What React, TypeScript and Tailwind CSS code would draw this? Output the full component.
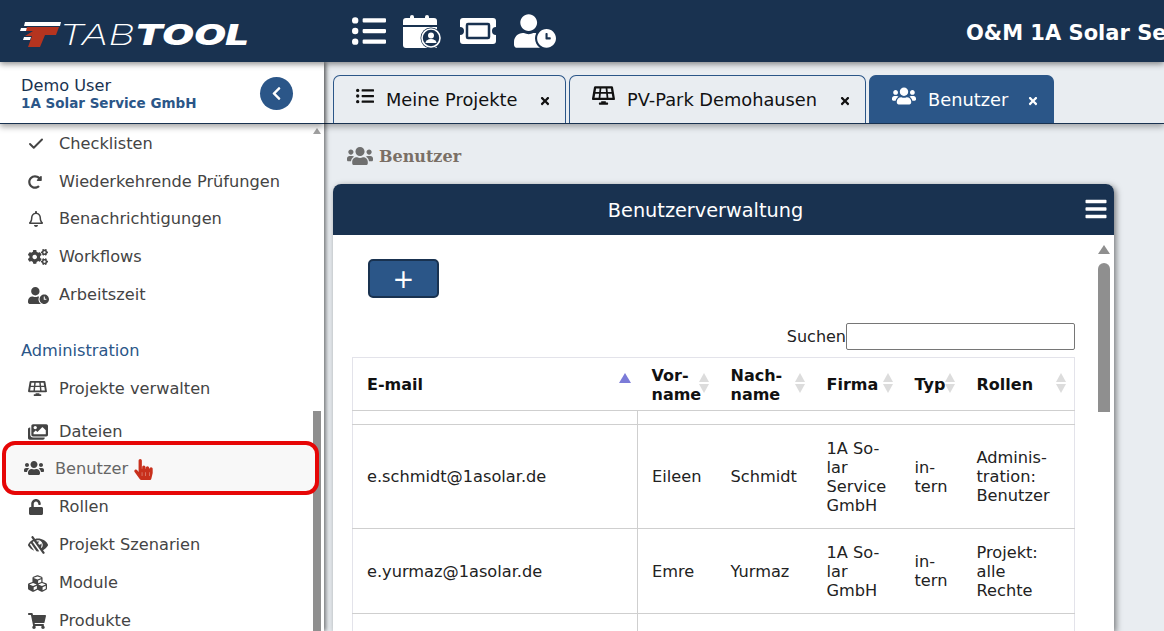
import { ReactNode } from 'react';
import { Check } from 'lucide-react';
import {
  FaBars,
  FaChevronLeft,
  FaCogs,
  FaCubes,
  FaHandPointer,
  FaImages,
  FaListUl,
  FaLowVision,
  FaRedoAlt,
  FaRegBell,
  FaShoppingCart,
  FaSolarPanel,
  FaTimes,
  FaUnlock,
  FaUserClock,
  FaUsers,
} from 'react-icons/fa';

const FONT = "font-['DejaVu_Sans',Verdana,sans-serif]";

function Logo() {
  return (
    <div className="mt-[7px] flex h-[26px] items-center">
      <svg width="43" height="26" viewBox="0 0 43 26" className="-mr-[3px] shrink-0">
        <polygon points="6,0 42,0 41,4 5,4" fill="#ffffff" />
        <polygon points="2,6 12,6 11,9 1,9" fill="#ffffff" />
        <polygon points="8,5 40,5 37,13 26,13 21,25 9,25 13,14 6,14 14,9 7,9" fill="#b5341f" />
        <polygon points="5,15 12,15 11,18 4,18" fill="#ffffff" />
      </svg>
      <span className="origin-left scale-x-[1.47] whitespace-nowrap font-['Inter',sans-serif] text-[28px] italic leading-none text-white">
        <span className="font-extralight">TAB</span>
        <span className="font-black">TOOL</span>
      </span>
    </div>
  );
}

function CalendarUser() {
  return (
    <svg width="38" height="33" viewBox="0 0 38 33" className="block">
      <rect x="7" y="0" width="4" height="6" rx="2" fill="#fff" />
      <rect x="22" y="0" width="4" height="6" rx="2" fill="#fff" />
      <path d="M3 3h28a3 3 0 0 1 3 3v4H0V6a3 3 0 0 1 3-3z" fill="#fff" />
      <path d="M0 12h34v20a1 1 0 0 1-1 1H3a3 3 0 0 1-3-3z" fill="#fff" />
      <circle cx="28" cy="23" r="10.5" fill="#193250" />
      <circle cx="28" cy="23" r="9" fill="none" stroke="#fff" strokeWidth="1.6" />
      <circle cx="28" cy="20.5" r="3" fill="#fff" />
      <path d="M22.5 28a5.5 4 0 0 1 11 0z" fill="#fff" />
    </svg>
  );
}

function Ticket() {
  return (
    <svg width="38" height="28" viewBox="0 0 38 28" fill="none" className="block">
      <path
        d="M4 1h30a3 3 0 0 1 3 3v6a4 4 0 0 0 0 8v6a3 3 0 0 1-3 3H4a3 3 0 0 1-3-3v-6a4 4 0 0 0 0-8V4a3 3 0 0 1 3-3z"
        fill="#fff"
      />
      <rect x="8" y="7" width="22" height="14" rx="1" fill="#fff" stroke="#193250" strokeWidth="2.5" />
    </svg>
  );
}

function NavItem({ icon, label }: { icon: ReactNode; label: string }) {
  return (
    <div className="flex h-[37.8px] items-center pl-[28px] text-[16.2px] text-[#444]">
      <span className="flex w-[31px] shrink-0 items-center">{icon}</span>
      <span>{label}</span>
    </div>
  );
}

function Tab({
  icon,
  label,
  width,
  active,
}: {
  icon: ReactNode;
  label: string;
  width: string;
  active?: boolean;
}) {
  return (
    <div
      className={`${width} flex h-[48px] items-center rounded-t-[7px] border border-b-0 border-[#2b5688] pl-[22px] pt-[2px] text-[17.8px] ${
        active ? 'bg-[#2b5688] text-white' : 'bg-[#e9edf1] text-[#111]'
      }`}
    >
      <span className="mr-[12px] flex -translate-y-[5px] items-center">{icon}</span>
      <span className="flex-1 whitespace-nowrap">{label}</span>
      <FaTimes size={12} className="mr-[14px] shrink-0" />
    </div>
  );
}

function SortArrows({ active }: { active?: boolean }) {
  if (active) {
    return (
      <span className="absolute right-[7px] top-[15px] h-0 w-0 border-x-[6px] border-b-[10px] border-x-transparent border-b-[#7b7bd8]" />
    );
  }
  return (
    <span className="absolute right-[8px] top-[15px] flex flex-col gap-[2px]">
      <span className="h-0 w-0 border-x-[5px] border-b-[9px] border-x-transparent border-b-[#dcdcdc]" />
      <span className="h-0 w-0 border-x-[5px] border-t-[9px] border-x-transparent border-t-[#dcdcdc]" />
    </span>
  );
}

function Th({ children, active }: { children: ReactNode; active?: boolean }) {
  return (
    <th className="relative border-b border-[#cfcfcf] pl-[14px] pt-[1px] text-left align-middle text-[16px] font-bold leading-[19px] text-[#111]">
      {children}
      <SortArrows active={active} />
    </th>
  );
}

const CELL = 'border-b border-[#cfcfcf] pl-[14px] text-[16.2px] leading-[19px] text-[#222]';

const rows = [
  {
    email: 'e.schmidt@1asolar.de',
    first: 'Eileen',
    last: 'Schmidt',
    firm: ['1A So-', 'lar', 'Service', 'GmbH'],
    role: ['Adminis-', 'tration:', 'Benutzer'],
    h: 'h-[104px]',
  },
  {
    email: 'e.yurmaz@1asolar.de',
    first: 'Emre',
    last: 'Yurmaz',
    firm: ['1A So-', 'lar', 'GmbH'],
    role: ['Projekt:', 'alle', 'Rechte'],
    h: 'h-[85px]',
  },
];

export default function App() {
  return (
    <div className={`${FONT} flex h-[631px] w-[1164px] flex-col overflow-hidden bg-[#e9edf1]`}>
      <header className="z-20 flex h-[62px] shrink-0 items-center overflow-hidden whitespace-nowrap bg-[#193250] text-white shadow-[0_2px_6px_rgba(0,0,0,0.45)]">
        <div className="ml-[19px] w-[333px] shrink-0">
          <Logo />
        </div>
        <div className="flex w-[614px] shrink-0 items-center">
          <FaListUl size={34} className="mr-[17px]" />
          <span className="mr-[18px]">
            <CalendarUser />
          </span>
          <span className="mr-[17px]">
            <Ticket />
          </span>
          <FaUserClock size={42} className="-my-2" />
        </div>
        <span className="mt-[6px] text-[21px] font-bold">O&amp;M 1A Solar Service GmbH</span>
      </header>

      <div className="flex min-h-0 flex-1">
        <aside className="z-10 flex w-[324px] shrink-0 flex-col bg-white shadow-[2px_0_4px_rgba(0,0,0,0.5)]">
          <div className="z-10 flex h-[62px] shrink-0 items-center border-b border-[#193250] bg-white pl-[21px] pr-[31px] pt-[2px] shadow-[0_3px_6px_rgba(0,0,0,0.35)]">
            <div className="flex-1">
              <div className="text-[16.2px] leading-[19px] text-[#193250]">Demo User</div>
              <div className="text-[13.5px] font-bold leading-[16px] text-[#2b5688]">1A Solar Service GmbH</div>
            </div>
            <span className="flex h-[33px] w-[33px] items-center justify-center rounded-full bg-[#2b5688] text-white">
              <FaChevronLeft size={15} />
            </span>
          </div>
          <div className="relative min-h-0 flex-1 overflow-hidden pt-[1px]">
            <span className="absolute right-[3px] top-[4px] h-0 w-0 border-x-[4px] border-b-[6px] border-x-transparent border-b-[#a0a0a0]" />
            <span className="absolute bottom-0 right-[3px] top-[287px] w-[8px] bg-[#8f8f8f]" />
            <NavItem icon={<Check size={18} strokeWidth={2.6} className="-ml-[1px]" />} label="Checklisten" />
            <NavItem icon={<FaRedoAlt size={14} />} label="Wiederkehrende Prüfungen" />
            <NavItem icon={<FaRegBell size={16} />} label="Benachrichtigungen" />
            <NavItem icon={<FaCogs size={20} />} label="Workflows" />
            <NavItem icon={<FaUserClock size={21} />} label="Arbeitszeit" />
            <div className="flex h-[56px] items-end pb-[7px] pl-[21px] text-[16.2px] text-[#2b5688]">Administration</div>
            <NavItem icon={<FaSolarPanel size={19} />} label="Projekte verwalten" />
            <div className="mt-[5px]">
              <NavItem icon={<FaImages size={20} />} label="Dateien" />
            </div>
            <div className="relative z-10 -mb-[6px] -mt-[10px] ml-[2px] mr-[5px] flex h-[54px] items-center rounded-[13px] border-[4px] border-[#e60606] bg-[#f8f8f8] pl-[18px] pt-[3px] text-[16.2px] text-[#666]">
              <FaUsers size={20} className="-mt-[3px] mr-[11px] text-[#444]" />
              <span>Benutzer</span>
              <FaHandPointer size={21} className="ml-[5px] text-[#c8301c]" />
            </div>
            <NavItem icon={<FaUnlock size={16} />} label="Rollen" />
            <NavItem icon={<FaLowVision size={20} />} label="Projekt Szenarien" />
            <NavItem icon={<FaCubes size={19} />} label="Module" />
            <NavItem icon={<FaShoppingCart size={18} />} label="Produkte" />
          </div>
        </aside>

        <main className="flex min-w-0 flex-1 flex-col">
          <div className="flex h-[62px] shrink-0 items-end gap-[3px] border-b border-[#193250] pl-[9px] shadow-[0_3px_6px_rgba(0,0,0,0.3)]">
            <Tab width="w-[233px]" icon={<FaListUl size={18} />} label="Meine Projekte" />
            <Tab width="w-[297px]" icon={<FaSolarPanel size={23} />} label="PV-Park Demohausen" />
            <Tab width="w-[185px]" active icon={<FaUsers size={24} />} label="Benutzer" />
          </div>

          <div className="flex h-[60px] shrink-0 items-center pl-[23px] pt-[6px] font-['DejaVu_Serif',serif] text-[16px] font-bold text-[#7a6f66]">
            <FaUsers size={26} className="-mt-[3px] mr-[6px] text-[#6f6f6f]" />
            Benutzer
          </div>

          <section className="ml-[9px] flex min-h-0 w-[781px] flex-1 flex-col rounded-t-[8px] bg-white shadow-[2px_2px_6px_rgba(0,0,0,0.5)]">
            <div className="relative flex h-[51px] shrink-0 items-center justify-center rounded-t-[8px] bg-[#193250] pr-[36px] pt-[3px] text-[19.3px] text-white">
              Benutzerverwaltung
              <FaBars size={24} className="absolute right-[6px] top-[13px]" />
            </div>
            <div className="relative min-h-0 flex-1 overflow-hidden pl-[19px]">
              <span className="absolute right-[4px] top-[10px] h-0 w-0 border-x-[6px] border-b-[9px] border-x-transparent border-b-[#8f8f8f]" />
              <span className="absolute right-[4px] top-[28px] h-[149px] w-[12px] rounded-t-[6px] bg-[#8f8f8f]" />

              <button
                type="button"
                className="ml-[16px] mt-[24px] flex h-[39px] w-[71px] items-center justify-center rounded-[5px] border-2 border-[#193250] bg-[#2b5688] text-[26px] leading-none text-white"
              >
                +
              </button>
              <div className="mt-[25px] flex h-[27px] w-[723px] items-center justify-end text-[16px] text-[#222]">
                Suchen
                <input
                  type="text"
                  className="h-[27px] w-[229px] rounded-[2px] border border-[#767676] bg-white"
                />
              </div>
              <table className="mt-[7px] w-[723px] table-fixed border-collapse border border-[#e3e3ea]">
                <colgroup>
                  <col className="w-[285px]" />
                  <col className="w-[79px]" />
                  <col className="w-[96px]" />
                  <col className="w-[88px]" />
                  <col className="w-[62px]" />
                  <col />
                </colgroup>
                <thead>
                  <tr className="h-[53px]">
                    <Th active>E-mail</Th>
                    <Th>Vor-<br />name</Th>
                    <Th>Nach-<br />name</Th>
                    <Th>Firma</Th>
                    <Th>Typ</Th>
                    <Th>Rollen</Th>
                  </tr>
                </thead>
                <tbody>
                  <tr className="h-[14px]">
                    <td className="border-b border-r border-[#cfcfcf]" />
                    <td colSpan={5} className="border-b border-[#cfcfcf]" />
                  </tr>
                  {rows.map((r) => (
                    <tr key={r.email} className={r.h}>
                      <td className={`${CELL} border-r`}>{r.email}</td>
                      <td className={CELL}>{r.first}</td>
                      <td className={CELL}>{r.last}</td>
                      <td className={CELL}>
                        {r.firm.map((l) => (
                          <div key={l}>{l}</div>
                        ))}
                      </td>
                      <td className={CELL}>
                        in-
                        <br />
                        tern
                      </td>
                      <td className={CELL}>
                        {r.role.map((l) => (
                          <div key={l}>{l}</div>
                        ))}
                      </td>
                    </tr>
                  ))}
                  <tr className="h-[40px]">
                    <td className="border-r border-[#cfcfcf]" />
                    <td colSpan={5} />
                  </tr>
                </tbody>
              </table>
            </div>
          </section>
        </main>
      </div>
    </div>
  );
}
